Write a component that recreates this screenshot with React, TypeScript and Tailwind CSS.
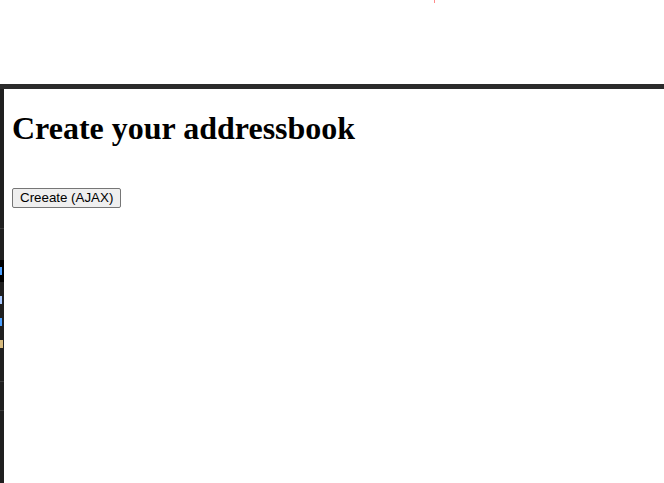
const App = () => {
    return (
        <div className="w-[664px] h-[483px] bg-white flex flex-col overflow-hidden">
            <div className="h-[84px] shrink-0 flex justify-start">
                <div className="ml-[434px] w-px h-[3px] bg-[#ff8a8a]" />
            </div>
            <div className="h-[5px] shrink-0 bg-[#2b2b2b]" />
            <div className="flex flex-1">
                {/* editor sliver peeking out on the left */}
                <div className="w-[4px] shrink-0 bg-[#1f1f1f] flex flex-col">
                    <div className="h-[139px] shrink-0" />
                    <div className="h-px bg-[#3a3a3a]" />
                    <div className="h-[31px]" />
                    <div className="h-[22px] bg-black flex items-center">
                        <div className="w-[2px] h-[8px] bg-[#4a9fff]" />
                    </div>
                    <div className="h-[14px]" />
                    <div className="w-[2px] h-[8px] bg-[#a8c8ff]" />
                    <div className="h-[14px]" />
                    <div className="w-[2px] h-[8px] bg-[#4a9fff]" />
                    <div className="h-[14px]" />
                    <div className="w-[3px] h-[8px] bg-[#d7ba7d]" />
                    <div className="h-[33px]" />
                    <div className="h-px bg-[#3a3a3a]" />
                    <div className="h-[28px]" />
                    <div className="h-px bg-[#3a3a3a]" />
                </div>
                <div className="flex-1 p-[8px] text-black">
                    <h1 className="font-['Liberation_Serif',serif] font-bold text-[32px] leading-[37px] mt-[13px] mb-[21px]">
                        Create your addressbook
                    </h1>
                    <div className="h-[16px]" />
                    <button
                        type="button"
                        className="font-['Liberation_Sans',Arial,sans-serif] text-[13.33px] leading-[16px] px-[7px] py-px bg-[#efefef] border border-[#767676] rounded-[2px] hover:bg-[#e5e5e5]"
                    >
                        Creeate (AJAX)
                    </button>
                </div>
            </div>
        </div>
    )
}

export default App
